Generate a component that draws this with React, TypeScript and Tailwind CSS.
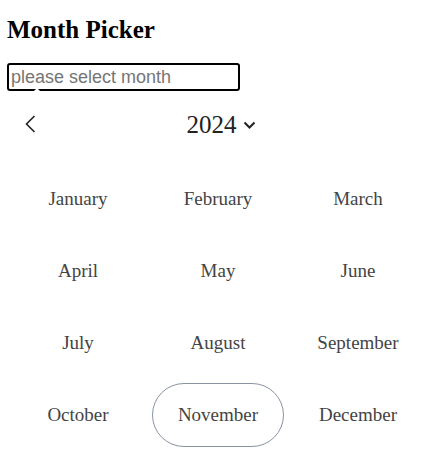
import { useState } from "react";

const MONTHS = [
  "January",
  "February",
  "March",
  "April",
  "May",
  "June",
  "July",
  "August",
  "September",
  "October",
  "November",
  "December",
];

export default function App() {
  const [active, setActive] = useState(10);

  return (
    <div className="min-h-screen bg-white px-[7px] pt-4 font-['Liberation_Serif',serif] text-black">
      <h1 className="text-[25px] font-bold leading-[28px]">Month Picker</h1>

      <div className="relative mt-[19px] w-[233px]">
        <input
          placeholder="please select month"
          className="h-[28px] w-full rounded-[3px] border-2 border-black px-[2px] font-['Liberation_Sans',sans-serif] text-[18px] leading-none text-black outline-none placeholder:text-[#757575]"
        />
        {/* popup arrow notch */}
        <div className="absolute left-[26px] top-[25px] h-0 w-0 border-x-[4px] border-b-[4px] border-x-transparent border-b-white" />
      </div>

      <div className="ml-px w-[420px]">
        {/* Year header */}
        <div className="mt-[9px] grid h-[48px] grid-cols-[60px_1fr_60px] items-center">
          <button className="flex items-center pl-[16px]">
            <svg width="12" height="20" viewBox="0 0 12 20" fill="none">
              <path d="M10.5 2 L2.5 10 L10.5 18" stroke="#222" strokeWidth="1.6" />
            </svg>
          </button>
          <div className="flex items-center justify-center pl-[6px]">
            <span className="text-[25px] leading-none text-[#222]">2024</span>
            <svg className="ml-[6px] mt-[2px]" width="13" height="8" viewBox="0 0 13 8" fill="none">
              <path d="M1.5 1.5 L6.5 6.5 L11.5 1.5" stroke="#222" strokeWidth="2" />
            </svg>
          </div>
          <div />
        </div>

        {/* Months */}
        <div className="mt-[15px] grid grid-cols-3">
          {MONTHS.map((m, i) => (
            <div key={m} className="p-1">
              <button
                onClick={() => setActive(i)}
                className={
                  "flex h-[64px] w-full items-center justify-center rounded-full text-[19px] text-[#444] " +
                  (i === active ? "border border-[#8a93a3]" : "border border-transparent")
                }
              >
                {m}
              </button>
            </div>
          ))}
        </div>
      </div>
    </div>
  );
}
